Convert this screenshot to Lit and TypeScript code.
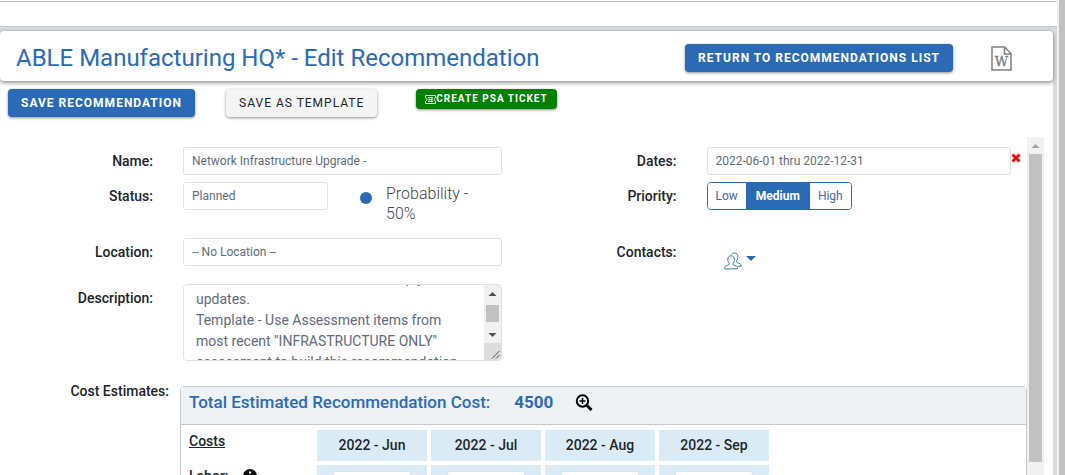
import { LitElement, html, css } from "lit";
import { customElement, state, query } from "lit/decorators.js";

const DESCRIPTION = `Review the current networks; comply
updates.
Template - Use Assessment items from most recent "INFRASTRUCTURE ONLY" assessment to build this recommendation.
Adjust quantities and labor as required.`;

@customElement("app-root")
export class AppRoot extends LitElement {
  @state() private priority = "Medium";
  @query("textarea") private description!: HTMLTextAreaElement;

  private months = ["2022 - Jun", "2022 - Jul", "2022 - Aug", "2022 - Sep"];

  static styles = css`
    :host {
      display: flex;
      height: 100vh;
      overflow: hidden;
      background: #fff;
      color: #212529;
      font-family: Roboto, "Liberation Sans", sans-serif;
      font-size: 14px;
      line-height: 20px;
    }
    * { box-sizing: border-box; }
    button, input, select, textarea { font: inherit; color: inherit; margin: 0; }
    button { cursor: pointer; }
    svg { display: block; flex: none; }

    .page { flex: 1; min-width: 0; display: flex; flex-direction: column; background: #d6dbdf; }
    .topbar { flex: none; height: 27px; background: #fff; border-bottom: 1px solid #c4c7cc; padding-top: 1px; }
    .topbar-line { border-top: 1px solid #c4c4c8; }
    .sheet { flex: 1; min-height: 0; margin: 4px 4px 0 0; display: flex; flex-direction: column; background: #fff; border-radius: 4px 4px 0 0; }
    .outer-scroll { flex: none; width: 8px; background: #c1c1c1; border-left: 2px solid #f1f1f1; }

    .header {
      flex: none; display: flex; align-items: center; height: 50px; padding: 4px 41px 0 16px;
      border-radius: 4px; background: #fff;
      box-shadow: 0 2px 4px rgba(0, 0, 0, 0.4), 0 0 2px rgba(0, 0, 0, 0.2);
    }
    h1 { margin: 0; flex: 1; font-size: 24px; line-height: 32px; font-weight: 400; color: #2b6bb5; }
    .btn {
      height: 28px; padding: 0 13px; border: 0; border-radius: 4px; white-space: nowrap;
      font-size: 12px; line-height: 28px; letter-spacing: 1px; text-transform: uppercase;
      box-shadow: 0 1px 3px rgba(0, 0, 0, 0.45);
    }
    .primary { background: #2b6bb5; color: #fff; font-weight: 700; }
    .light { background: #f4f4f4; color: #212529; font-weight: 400; }
    .green {
      display: flex; align-items: center; height: 20px; padding: 0 9px; background: #008000; color: #fff;
      font-size: 10px; line-height: 20px; font-weight: 700;
    }
    .word { margin-left: 38px; padding: 0; border: 0; background: none; }
    .word text { font-family: "DejaVu Serif", serif; font-size: 13px; fill: #777; stroke: #777; stroke-width: 0.3px; }
    .actions { flex: none; display: flex; align-items: flex-start; padding: 8px 8px 0; }
    .actions .light { margin-left: 31px; }
    .actions .green { margin-left: 39px; }

    .body { flex: 1; min-height: 0; display: flex; margin: 20px 9px 0 0; }
    .form { flex: 1; min-width: 0; overflow: hidden; padding-top: 10px; }
    .scroll { flex: none; width: 17px; display: flex; flex-direction: column; align-items: center; background: #f1f1f1; }
    .scroll .thumb { flex: none; width: 13px; background: #c1c1c1; }
    .body > .scroll .thumb { flex: 1; margin-bottom: 13px; }

    .halves { display: grid; grid-template-columns: 1fr 1fr; }
    .half { display: flex; flex-direction: column; }
    .row { display: grid; grid-template-columns: 153px 1fr; column-gap: 30px; padding-right: 12px; align-items: start; }
    .right .row { grid-template-columns: 163px 1fr; padding-right: 0; }
    .label { font-weight: 500; line-height: 28px; text-align: right; white-space: nowrap; }
    .cost-label { line-height: 20px; }
    .first { min-height: 28px; margin-bottom: 7px; }
    .second { min-height: 42px; margin-bottom: 14px; }
    .third { min-height: 28px; margin-bottom: 18px; }
    .field {
      width: 100%; height: 28px; padding: 0 8px; border: 1px solid #dfe1e5; border-radius: 3px;
      background: #fff; color: #636b78; font-size: 12px; appearance: none; outline: none;
    }
    .dates { display: flex; align-items: flex-start; }
    .dates .field { flex: 1; min-width: 0; }
    .status { display: flex; align-items: flex-start; }
    .status select { width: 145px; flex: none; }
    .knob { appearance: none; width: 12px; height: 12px; margin: 10px 14px 0 32px; background: transparent; flex: none; }
    .knob::-webkit-slider-runnable-track { height: 12px; background: transparent; }
    .knob::-webkit-slider-thumb { appearance: none; width: 12px; height: 12px; border-radius: 50%; background: #2b6bb5; }
    .prob { padding-top: 2px; font-size: 16px; font-weight: 300; color: #444; }

    .clear { flex: none; width: 16px; padding: 6px 0 0; border: 0; background: none; }
    .group { display: flex; width: max-content; border: 1px solid #2b6bb5; border-radius: 4px; overflow: hidden; }
    .group button { height: 26px; padding: 0 8px; border: 0; background: #fff; color: #47689f; font-size: 12px; }
    .group button + button { border-left: 1px solid #2b6bb5; }
    .group button.on { padding: 0 9px; background: #2b6bb5; color: #fff; font-weight: 700; }
    .contacts { display: flex; gap: 4px; width: max-content; padding: 14px 0 0; margin-left: 17px; border: 0; background: none; }
    .contacts .caret { margin-top: 4px; }

    .area { display: flex; height: 77px; border: 1px solid #dfe1e5; border-radius: 4px; overflow: hidden; }
    .area textarea {
      flex: 1; min-width: 0; padding: 6px 12px; border: 0; outline: none; resize: none; overflow: hidden;
      font-size: 14px; line-height: 21px; color: #636b78; background: #fff;
    }
    .area .scroll .thumb { height: 17px; margin: 3px 0 4px; }
    .grip { width: 17px; flex: 1; background: #dcdcdc; }

    .costs { display: grid; grid-template-columns: 169px 1fr; column-gap: 11px; align-items: start; margin-top: 20px; }
    .panel { margin-top: 5px; border: 1px solid #c4c9d0; border-radius: 4px 4px 0 0; min-height: 200px; }
    .total {
      display: flex; align-items: flex-start; height: 38px; padding: 5px 8px 0; background: #eef2f5; border-bottom: 1px solid #c4c9d0;
      font-size: 17px; font-weight: 500; color: #2b6bb5;
    }
    .total b { margin-left: 24px; font-weight: 700; }
    .zoom { margin: 2px 0 0 22px; padding: 0; border: 0; background: none; }
    table { border-collapse: separate; border-spacing: 4px; margin-top: 1px; table-layout: fixed; width: 592px; }
    th, td { padding: 0; font-weight: 500; text-align: center; height: 31px; background: #dbebf6; }
    thead th { padding-bottom: 1px; }
    th.name { width: 128px; background: none; text-align: left; padding-left: 4px; vertical-align: top; line-height: 22px; }
    .costs-title { text-decoration: underline; }
    .info { display: flex; align-items: center; gap: 14px; line-height: 22px; }
    td .field { display: block; width: 78px; margin: 6px auto 0; }
  `;

  firstUpdated() {
    document.fonts.ready.then(() => { this.description.scrollTop = 23; });
    this.description.scrollTop = 23;
  }

  private arrow(up: boolean, color: string) {
    return html`<svg width="17" height="17" viewBox="0 0 17 17" aria-hidden="true">
      <path fill=${color} d=${up ? "M4.500 11L8.500 7L12.500 11Z" : "M4.500 7L8.500 11L12.500 7Z"} /></svg>`;
  }

  render() {
    return html`
      <div class="page">
        <div class="topbar"><div class="topbar-line"></div></div>
        <main class="sheet">
          <header class="header">
            <h1>ABLE Manufacturing HQ* - Edit Recommendation</h1>
            <button class="btn primary">Return to Recommendations List</button>
            <button class="word" aria-label="Export to Word">
              <svg width="21" height="25" viewBox="0 0 21 25">
                <path d="M1 1H13.500L20 7.500V24H1ZM13.500 1V8H20" fill="none" stroke="#808080" stroke-width="1.500" />
                <text x="10.500" y="20" text-anchor="middle">W</text>
              </svg>
            </button>
          </header>
          <div class="actions">
            <button class="btn primary">Save Recommendation</button>
            <button class="btn light">Save as Template</button>
            <button class="btn green">
              <svg width="11" height="9" viewBox="0 0 11 9">
                <path d="M.5.5H10.500V3A1.500 1.500 0 0 0 10.500 6V8.500H.5V6A1.500 1.500 0 0 0 .5 3Z" fill="none" stroke="#d9f0d9" />
                <path d="M3 2.500H8M3 6.500H8M4 2.500V6.500M7 2.500V6.500M4 4.500H7" stroke="#d9f0d9" />
              </svg>Create PSA Ticket
            </button>
          </div>
          <div class="body">
            <div class="form">
              <div class="halves">
                <div class="half">
                  <div class="row first">
                    <label class="label" for="name">Name:</label>
                    <input class="field" id="name" value="Network Infrastructure Upgrade -" />
                  </div>
                  <div class="row second">
                    <label class="label" for="status">Status:</label>
                    <div class="status">
                      <select class="field" id="status"><option>Planned</option></select>
                      <input class="knob" id="prob" type="range" min="0" max="100" value="50" />
                      <label class="prob" for="prob">Probability - 50%</label>
                    </div>
                  </div>
                  <div class="row third">
                    <label class="label" for="location">Location:</label>
                    <select class="field" id="location"><option>-- No Location --</option></select>
                  </div>
                  <div class="row">
                    <label class="label" for="desc">Description:</label>
                    <div class="area">
                      <textarea id="desc" .value=${DESCRIPTION}></textarea>
                      <div class="scroll">
                        ${this.arrow(true, "#505050")}
                        <div class="thumb"></div>
                        ${this.arrow(false, "#505050")}
                        <div class="grip">
                          <svg width="17" height="17" viewBox="0 0 17 17">
                            <path d="M8 15.500L15.500 8M12 15.500L15.500 12" stroke="#555" />
                          </svg>
                        </div>
                      </div>
                    </div>
                  </div>
                </div>
                <div class="half right">
                  <div class="row first">
                    <label class="label" for="dates">Dates:</label>
                    <div class="dates">
                      <input class="field" id="dates" value="2022-06-01 thru 2022-12-31" />
                      <button class="clear" aria-label="Clear dates">
                        <svg width="10" height="10" viewBox="0 0 10 10">
                          <path d="M1.500 1.500L8.500 8.500M8.500 1.500L1.500 8.500" stroke="#f00" stroke-width="3" />
                        </svg>
                      </button>
                    </div>
                  </div>
                  <div class="row second">
                    <span class="label" id="priority">Priority:</span>
                    <div class="group" role="group" aria-labelledby="priority">
                      ${["Low", "Medium", "High"].map((p) => html`
                        <button class=${p === this.priority ? "on" : ""} aria-pressed=${p === this.priority}
                          @click=${() => (this.priority = p)}>${p}</button>`)}
                    </div>
                  </div>
                  <div class="row third">
                    <span class="label" id="contacts">Contacts:</span>
                    <button class="contacts" aria-labelledby="contacts">
                      <svg width="18" height="18" viewBox="0 0 19 18" fill="none" stroke="#2b6bb5">
                        <path d="M.8 17.300V15.500C1.500 13.800 5.500 13.500 5.500 12.500V11.500C3.500 9.500 3 3.500 7.500 3.500S11.500 9.500 9.500 11.500V12.500C9.500 13.500 13.500 13.800 14.200 15.500V17.300Z" />
                        <path d="M8 1.800C9 .5 10.500.5 11.500.6C15.500 1 15 7 13.300 8.800V10C13.300 11 17.500 11.500 18.200 13V14.500H15" />
                      </svg>
                      <svg class="caret" width="10" height="5" viewBox="0 0 10 5"><path d="M0 0H10L5 5Z" fill="#2b6bb5" /></svg>
                    </button>
                  </div>
                </div>
              </div>
              <div class="costs">
                <span class="label cost-label">Cost Estimates:</span>
                <section class="panel">
                  <div class="total">
                    <span>Total Estimated Recommendation Cost:</span><b>4500</b>
                    <button class="zoom" aria-label="Show details">
                      <svg width="18" height="18" viewBox="0 0 18 18" fill="none" stroke="#000">
                        <circle cx="7.500" cy="7" r="5.700" stroke-width="2" />
                        <path d="M4.500 7H10.500M7.500 4V10" stroke-width="1.500" />
                        <path d="M11.500 11L16.500 16" stroke-width="3" />
                      </svg>
                    </button>
                  </div>
                  <table>
                    <thead>
                      <tr>
                        <th class="name" scope="col"><span class="costs-title">Costs</span></th>
                        ${this.months.map((m) => html`<th scope="col">${m}</th>`)}
                      </tr>
                    </thead>
                    <tbody>
                      <tr>
                        <th class="name" scope="row">
                          <span class="info">Labor:
                            <svg width="14" height="14" viewBox="0 0 14 14">
                              <circle cx="7" cy="7" r="7" fill="#111" />
                              <path d="M7 2.500V4.500M7 6V11" stroke="#fff" stroke-width="2" />
                            </svg>
                          </span>
                        </th>
                        ${this.months.map((m) => html`<td><input class="field" aria-label=${"Labor " + m} /></td>`)}
                      </tr>
                    </tbody>
                  </table>
                </section>
              </div>
            </div>
            <div class="scroll" aria-hidden="true">
              ${this.arrow(true, "#a3a3a3")}
              <div class="thumb"></div>
            </div>
          </div>
        </main>
      </div>
      <div class="outer-scroll" aria-hidden="true"></div>
    `;
  }
}
